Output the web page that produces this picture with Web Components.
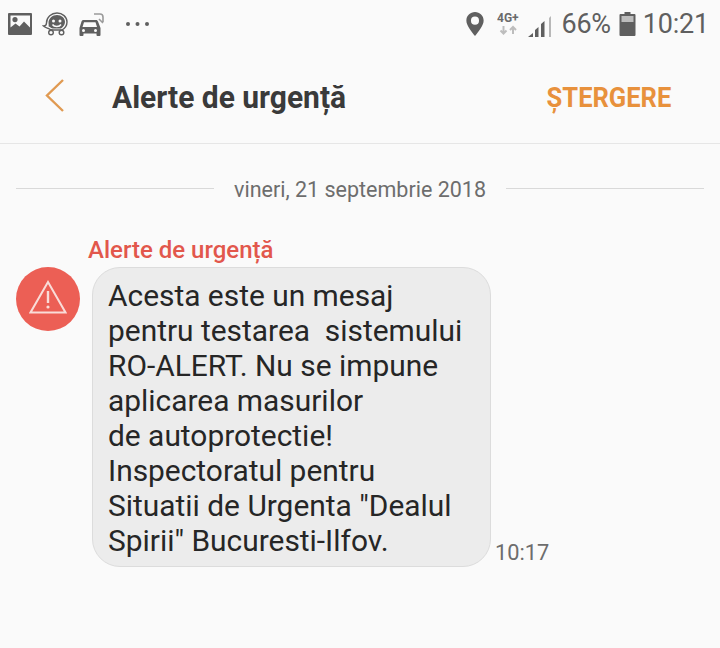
<!DOCTYPE html>
<html>
<head>
<meta charset="utf-8">
<style>
  html, body { margin: 0; background: #fafafa; }
  body { width: 720px; height: 648px; overflow: hidden; font-family: Roboto, sans-serif; }
</style>
</head>
<body>
<status-bar></status-bar>
<app-header title="Alerte de urgență" action="ȘTERGERE"></app-header>
<date-divider>vineri, 21 septembrie 2018</date-divider>
<alert-message sender="Alerte de urgență" time="10:17">Acesta este un mesaj<br>pentru testarea&nbsp; sistemului<br>RO-ALERT. Nu se impune<br>aplicarea masurilor<br>de autoprotectie!<br>Inspectoratul pentru<br>Situatii de Urgenta "Dealul<br>Spirii" Bucuresti-Ilfov.</alert-message>

<script>
class StatusBar extends HTMLElement {
  constructor() {
    super();
    const root = this.attachShadow({ mode: 'open' });
    root.innerHTML = `
      <style>
        :host { display: flex; height: 48px; box-sizing: border-box; padding: 0 11px 0 8px; align-items: center; justify-content: space-between; color: #5f5f5f; }
        .side { display: flex; align-items: center; }
        svg { display: block; fill: #5f5f5f; }
        .pct { font-size: 27px; margin-left: 9px; margin-right: 8px; letter-spacing: -.3px; }
        .clock { font-size: 27px; margin-left: 7px; letter-spacing: -.2px; }
      </style>
      <div class="side">
        <svg width="24" height="22" viewBox="0 0 24 22"><path fill-rule="evenodd" d="M1 0h22a1 1 0 0 1 1 1v20a1 1 0 0 1-1 1H1a1 1 0 0 1-1-1V1a1 1 0 0 1 1-1zm1.500 2.500v12l5-4 4 3 4.500-5 6 6v-12zM7 4a2.600 2.600 0 1 1 0 5.200A2.600 2.600 0 0 1 7 4z"/></svg>
        <svg style="margin-left:10px" width="27" height="24" viewBox="0 0 27 24"><path d="M15 1c5.500 0 10 4 10 9 0 4-2.500 6.500-5 8h-8.500c-2 0-4-.5-5-1.500C5 16 3 15.500 1.500 14c2 0 3-1 3-3C4.500 5 9.500 1 15 1z" fill="#fafafa" stroke="#5f5f5f" stroke-width="1.400"/><path d="M15 3c4.500 0 8 3 8 7 0 3-2 5-4 6.500h-7c-1.500 0-3-.5-4-1.500-.5-.3-1-.5-1.500-.8C7 13 6.500 12 6.500 11 6.500 6.500 10.500 3 15 3z"/><circle cx="11.500" cy="9" r="1.500" fill="#fafafa"/><circle cx="18" cy="9" r="1.500" fill="#fafafa"/><path d="M10.500 12.500c1.500 2.500 7 2.500 8.500 0" fill="none" stroke="#fafafa" stroke-width="1.500"/><circle cx="9" cy="20.500" r="2.300" fill="#fafafa" stroke="#5f5f5f" stroke-width="1.400"/><circle cx="19.500" cy="20.500" r="2.300" fill="#fafafa" stroke="#5f5f5f" stroke-width="1.400"/></svg>
        <svg style="margin-left:10px" width="25" height="23" viewBox="0 0 25 23"><path fill-rule="evenodd" d="M4.500 7h12.500c1 0 1.700.6 2 1.500L21.500 15v7a1 1 0 0 1-1 1h-2a1 1 0 0 1-1-1v-1.500H4.500V22a1 1 0 0 1-1 1h-2a1 1 0 0 1-1-1v-7l2-6.500C2.800 7.600 3.500 7 4.500 7zm.500 2.200L3.500 14h14.500L16.500 9.200zM4.500 16a1.500 1.500 0 1 0 0 3 1.500 1.500 0 0 0 0-3zm12 0a1.500 1.500 0 1 0 0 3 1.500 1.500 0 0 0 0-3z"/><path d="M15 1h6a3 3 0 0 1 3 3v5M20 6l4 4" fill="none" stroke="#9a9a9a" stroke-width="1.600"/></svg>
        <svg style="margin-left:21px" width="25" height="6" viewBox="0 0 25 6"><circle cx="3" cy="3" r="2"/><circle cx="12.500" cy="3" r="2"/><circle cx="22" cy="3" r="2"/></svg>
      </div>
      <div class="side">
        <svg width="18" height="24" viewBox="0 0 18 25"><path fill-rule="evenodd" d="M9 0c5 0 9 3.800 9 8.800C18 14 13 20 9 25 5 20 0 14 0 8.800 0 3.800 4 0 9 0zm0 4.800a4.200 4.200 0 1 0 0 8.400 4.200 4.200 0 0 0 0-8.400z"/></svg>
        <svg style="margin-left:13px" width="25" height="24" viewBox="0 0 25 24"><text x="0" y="10" font-family="Roboto" font-weight="700" font-size="12" fill="#6a6a6a">4G+</text><path d="M6.500 14v7M3.500 18.500l3 3 3-3M16 22v-7M13 18l3-3 3 3" fill="none" stroke="#bdbdbd" stroke-width="2"/></svg>
        <svg style="margin-left:6px" width="25" height="25" viewBox="0 0 25 25"><path d="M0 25l5-4v4zM7 25v-7l3.500-3v10zM13 25V12l3.500-3v16z"/><path d="M20 25V6l2-2v21z" fill="#b8b8b8" transform="translate(1)"/></svg>
        <span class="pct">66%</span>
        <svg width="17" height="24" viewBox="0 0 16 24"><path d="M5 0h6v2h4a1 1 0 0 1 1 1v20a1 1 0 0 1-1 1H1a1 1 0 0 1-1-1V3a1 1 0 0 1 1-1h4z"/><rect x="2" y="4" width="12" height="6" fill="#bdbdbd"/></svg>
        <span class="clock">10:21</span>
      </div>`;
  }
}

class AppHeader extends HTMLElement {
  connectedCallback() {
    if (this.shadowRoot) return;
    const root = this.attachShadow({ mode: 'open' });
    root.innerHTML = `
      <style>
        :host { display: flex; align-items: center; height: 96px; box-sizing: border-box; padding: 3px 49px 0 45px; border-bottom: 1px solid #e6e6e6; }
        svg { display: block; flex: none; margin-top: -3px; }
        h1 { margin: 0 0 0 48px; flex: 1; font: 700 32px Roboto, sans-serif; color: #3a3a3a; transform: scaleX(.937); transform-origin: left center; }
        .action { font: 700 28.500px Roboto, sans-serif; color: #e8913c; transform: scaleX(.895); transform-origin: right center; }
      </style>
      <svg width="19" height="33" viewBox="0 0 19 33"><path d="M18 1L2 16.500 18 32" fill="none" stroke="#e09a52" stroke-width="2.400"/></svg>
      <h1>${this.getAttribute('title')}</h1>
      <span class="action">${this.getAttribute('action')}</span>`;
  }
}

const dividerTemplate = document.createElement('template');
dividerTemplate.innerHTML = `
  <style>
    :host { display: flex; align-items: center; gap: 20px; padding: 0 16px 0 16px; margin-top: 30px; height: 30px; color: #6d6d6d; font-size: 21.500px; }
    i { flex: 1; height: 1px; background: #d9d9d9; margin-top: -2px; }
  </style>
  <i></i><slot></slot><i></i>`;

class DateDivider extends HTMLElement {
  constructor() {
    super();
    this.attachShadow({ mode: 'open' }).append(dividerTemplate.content.cloneNode(true));
  }
}

class AlertMessage extends HTMLElement {
  connectedCallback() {
    if (this.shadowRoot) return;
    const root = this.attachShadow({ mode: 'open' });
    root.innerHTML = `
      <style>
        :host { display: grid; grid-template-columns: 64px auto 1fr; column-gap: 12px; padding: 0 16px; margin-top: 33px; }
        .name { grid-column: 2 / 4; margin: -2px 0 2px -4px; font: 500 24px/30px Roboto, sans-serif; color: #e2574c; }
        .avatar { width: 64px; height: 64px; border-radius: 50%; background: #ec5f55; display: flex; align-items: center; justify-content: center; padding-bottom: 0; }
        .avatar svg { margin-top: -4px; }
        .bubble { box-sizing: border-box; width: 399px; height: 300px; padding: 10px 15px; background: #ececec; border: 1px solid #dcdcdc; border-radius: 28px; font-size: 29.900px; line-height: 35px; color: #262626; }
        .time { align-self: end; margin: 0 0 -1px -8px; font-size: 21.800px; line-height: 30px; color: #6d6d6d; }
      </style>
      <div class="name">${this.getAttribute('sender')}</div>
      <div class="avatar">
        <svg width="38" height="34" viewBox="0 0 38 34"><path d="M19 2L36.500 32.500h-35z" fill="none" stroke="#f9dcd8" stroke-width="2"/><path d="M19 11v12" stroke="#f9dcd8" stroke-width="2.400"/><circle cx="19" cy="27" r="1.600" fill="#f9dcd8"/></svg>
      </div>
      <div class="bubble"><slot></slot></div>
      <div class="time">${this.getAttribute('time')}</div>`;
  }
}

customElements.define('status-bar', StatusBar);
customElements.define('app-header', AppHeader);
customElements.define('date-divider', DateDivider);
customElements.define('alert-message', AlertMessage);
</script>
</body>
</html>
